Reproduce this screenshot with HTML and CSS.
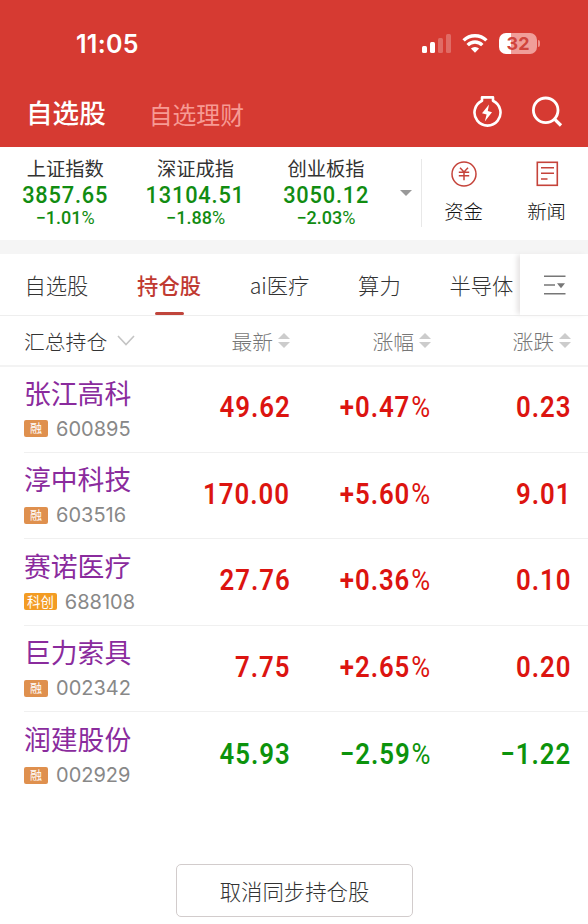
FILE: index.html
```html
<!DOCTYPE html>
<html lang="zh-CN">
<head>
    <meta charset="utf-8">
    <title>自选股</title>
    <link rel="stylesheet" href="styles.css">
</head>
<body>

<div id="container">
    <!-- Header box -->
    <header class="header-box">
        <div class="status-bar">
            <span class="time">11:05</span>
            <div class="status-icons">
                <svg class="signal" width="30" height="19" viewBox="0 0 30 19" fill="#fff">
                    <rect x="0" y="12" width="5" height="7" rx="1.5"/>
                    <rect x="8" y="8" width="5" height="11" rx="1.5"/>
                    <rect x="16" y="4" width="5" height="15" rx="1.5" opacity=".25"/>
                    <rect x="24" y="0" width="5" height="19" rx="1.5" opacity=".25"/>
                </svg>
                <svg class="wifi" width="26" height="19" viewBox="0 0 26 19" fill="none" stroke="#fff" stroke-width="3.4">
                    <path d="M1.6 6.4a16.2 16.2 0 0 1 22.8 0"/>
                    <path d="M5.7 11.1a10.3 10.3 0 0 1 14.6 0"/>
                    <path d="M8.9 14.6a5.8 5.8 0 0 1 8.2 0L13 18.8z" fill="#fff" stroke="none"/>
                </svg>
                <div class="battery"><span>32</span></div>
            </div>
        </div>
        <div class="title-bar">
            <h1>自选股</h1>
            <span class="title-other">自选理财</span>
            <svg class="icon-bolt" width="32" height="34" viewBox="0 0 32 34" fill="none" stroke="#fff" stroke-width="2.6" stroke-linejoin="round">
                <path d="M11 5.8V2.4h11v3.4A13 13 0 1 1 11 5.8z"/>
                <path d="M18 9.5l-7 8.8 4.6 1.2-1.8 7 7.2-9.2-4.2-1.2z" fill="#fff" stroke="none"/>
            </svg>
            <svg class="icon-search" width="32" height="32" viewBox="0 0 32 32" fill="none" stroke="#fff" stroke-width="2.8">
                <circle cx="14.7" cy="14.3" r="12.3"/>
                <path d="M23.3 22.8l6.7 6.7" stroke-width="3.2"/>
            </svg>
        </div>
    </header>

    <!-- Market indexes -->
    <section class="index-box">
        <div class="index-item">
            <div class="index-name">上证指数</div>
            <div class="index-value">3857.65</div>
            <div class="index-rate">−1.01<i>%</i></div>
        </div>
        <div class="index-item">
            <div class="index-name">深证成指</div>
            <div class="index-value">13104.51</div>
            <div class="index-rate">−1.88<i>%</i></div>
        </div>
        <div class="index-item">
            <div class="index-name">创业板指</div>
            <div class="index-value">3050.12</div>
            <div class="index-rate">−2.03<i>%</i></div>
        </div>
        <div class="index-more"><i class="arrow-down"></i></div>
        <div class="link-item">
            <svg width="26" height="26" viewBox="0 0 26 26" fill="none" stroke="#c5433a" stroke-width="1.5">
                <circle cx="13" cy="13" r="12"/>
                <path d="M9 6.8l4 4.2 4-4.2M7.8 11.3h10.4M7.8 14.8h10.4M13 11v8.2"/>
            </svg>
            <span>资金</span>
        </div>
        <div class="link-item">
            <svg width="24" height="26" viewBox="0 0 24 26" fill="none" stroke="#c5433a" stroke-width="1.6">
                <rect x="2.3" y="1.3" width="20" height="23"/>
                <path d="M6 6.8h13M6 12.3h13M6 18h6.5"/>
            </svg>
            <span>新闻</span>
        </div>
    </section>

    <!-- Group tabs -->
    <nav class="tabs">
        <a>自选股</a>
        <a class="active">持仓股</a>
        <a>ai医疗</a>
        <a>算力</a>
        <a>半导体</a>
        <div class="tabs-menu">
            <svg width="22" height="20" viewBox="0 0 22 20" fill="none" stroke="#777" stroke-width="1.4">
                <path d="M0 1.2h21.5M0 10h11M0 18.8h21.5"/>
                <path d="M13 8.2h8l-4 5z" fill="#777" stroke="none"/>
            </svg>
        </div>
    </nav>

    <div class="row table-head">
        <div class="head-group">汇总持仓
            <svg width="18" height="11" viewBox="0 0 18 11" fill="none" stroke="#c4c4c4" stroke-width="1.6"><path d="M1 1l8 8.5L17 1"/></svg>
        </div>
        <div class="head-col">最新<i class="sort"></i></div>
        <div class="head-col">涨幅<i class="sort"></i></div>
        <div class="head-col">涨跌<i class="sort"></i></div>
    </div>

    <!-- Stocks -->
    <main class="stocks">
        <div class="row stock up">
            <div class="stock-info">
                <div class="stock-name">张江高科</div>
                <div class="stock-code"><b class="tag">融</b>600895</div>
            </div>
            <div class="num"><span>49.62</span></div>
            <div class="num"><span>+0.47<i>%</i></span></div>
            <div class="num"><span>0.23</span></div>
        </div>
        <div class="row stock up">
            <div class="stock-info">
                <div class="stock-name">淳中科技</div>
                <div class="stock-code"><b class="tag">融</b>603516</div>
            </div>
            <div class="num"><span>170.00</span></div>
            <div class="num"><span>+5.60<i>%</i></span></div>
            <div class="num"><span>9.01</span></div>
        </div>
        <div class="row stock up">
            <div class="stock-info">
                <div class="stock-name">赛诺医疗</div>
                <div class="stock-code"><b class="tag tag-star">科创</b>688108</div>
            </div>
            <div class="num"><span>27.76</span></div>
            <div class="num"><span>+0.36<i>%</i></span></div>
            <div class="num"><span>0.10</span></div>
        </div>
        <div class="row stock up">
            <div class="stock-info">
                <div class="stock-name">巨力索具</div>
                <div class="stock-code"><b class="tag">融</b>002342</div>
            </div>
            <div class="num"><span>7.75</span></div>
            <div class="num"><span>+2.65<i>%</i></span></div>
            <div class="num"><span>0.20</span></div>
        </div>
        <div class="row stock down">
            <div class="stock-info">
                <div class="stock-name">润建股份</div>
                <div class="stock-code"><b class="tag">融</b>002929</div>
            </div>
            <div class="num"><span>45.93</span></div>
            <div class="num"><span>−2.59<i>%</i></span></div>
            <div class="num"><span>−1.22</span></div>
        </div>
    </main>

    <button class="cancel-button">取消同步持仓股</button>
</div>

</body>
</html>
```
FILE: styles.css
```css
* {
    box-sizing: border-box;
}

body {
    margin: 0;
    background-color: #fff;
    font-family: "Noto Sans CJK SC", sans-serif;
    color: #333;
}

#container {
    width: 588px;
    height: 924px;
    overflow: hidden;
}

svg {
    display: block;
    flex: none;
}

/* Header */
.header-box {
    height: 147px;
    background-color: #d63a32;
    color: #fff;
}

.status-bar {
    display: flex;
    align-items: center;
    justify-content: space-between;
    height: 87px;
    padding: 0 51px 0 76px;
}

.time {
    font: 600 25px/30px Inter, sans-serif;
    letter-spacing: 0.3px;
}

.status-icons {
    display: flex;
    align-items: center;
}

.wifi {
    margin: 0 11px 0 10px;
}

.battery {
    position: relative;
    width: 38px;
    height: 21px;
    border-radius: 7px;
    background: linear-gradient(90deg, #fff 12px, #f09e99 12px);
    text-align: center;
    font: 700 18px/21px Inter, sans-serif;
    color: #d0443d;
}

.battery::after {
    content: "";
    position: absolute;
    right: -3px;
    top: 7px;
    width: 2px;
    height: 7px;
    border-radius: 0 2px 2px 0;
    background-color: #ee918b;
}

.title-bar {
    display: flex;
    align-items: center;
    height: 50px;
    padding: 0 25px 0 26px;
}

.title-bar h1 {
    margin: 0;
    font-size: 26.6px;
    font-weight: 500;
    line-height: 40px;
}

.title-other {
    margin: 4px auto 0 43px;
    font-size: 23.8px;
    line-height: 36px;
    color: #f79a94;
}

.icon-bolt {
    margin-right: 28px;
}

/* Market indexes */
.index-box {
    display: flex;
    height: 107px;
    border-bottom: 14px solid #f5f5f5;
}

.index-item {
    width: 130.5px;
    padding-top: 8px;
    text-align: center;
    white-space: nowrap;
}

.index-name {
    font-size: 19.3px;
    line-height: 26px;
}

.index-value {
    font: 500 24.5px/28px Roboto, sans-serif;
    letter-spacing: 0.9px;
    transform: scaleX(0.89);
    color: #118c11;
}

.index-rate {
    font: 500 18px/18px Roboto, sans-serif;
    color: #118c11;
}

.index-rate i,
.num i {
    font-style: normal;
    font-weight: 400;
}

.index-more {
    display: flex;
    align-items: center;
    width: 30px;
    height: 68px;
    margin: 12px 0 0 1px;
    padding-left: 8px;
    border-right: 1px solid #e8e8e8;
}

.arrow-down {
    border: 6px solid transparent;
    border-top-color: #999;
    border-bottom: 0;
}

.link-item {
    display: flex;
    flex-direction: column;
    align-items: center;
    width: 83px;
    padding-top: 14px;
    font-size: 19.4px;
    font-weight: 300;
    line-height: 28px;
    color: #111;
}

.link-item span {
    margin-top: 10px;
}

/* Tabs */
.tabs {
    position: relative;
    display: flex;
    gap: 48.7px;
    height: 62px;
    padding-left: 24.5px;
    border-bottom: 1px solid #eee;
    font-size: 21.3px;
    font-weight: 300;
    line-height: 61px;
    white-space: nowrap;
    color: #333;
}

.tabs .active {
    position: relative;
    font-weight: 500;
    color: #c03a32;
}

.tabs .active::after {
    content: "";
    position: absolute;
    left: 50%;
    bottom: 0;
    width: 29px;
    height: 3px;
    margin-left: -14.5px;
    border-radius: 2px;
    background-color: #c0453c;
}

.tabs-menu {
    position: absolute;
    right: 0;
    top: 0;
    display: flex;
    align-items: center;
    width: 68px;
    height: 61px;
    padding-left: 24px;
    background-color: #fff;
    box-shadow: -4px 0 5px -1px #e6e4e4;
}

/* Table */
.row {
    display: grid;
    grid-template-columns: 1fr 126px 141px 140px;
    align-items: center;
    padding-right: 17px;
}

.table-head {
    height: 51px;
    padding-left: 24px;
    border-bottom: 2px solid #f3f3f3;
    font-size: 20.8px;
    font-weight: 300;
    color: #333;
}

.head-group {
    display: flex;
    align-items: center;
    gap: 10px;
}

.head-col {
    display: flex;
    align-items: center;
    justify-content: flex-end;
    color: #777;
}

.sort {
    width: 12px;
    margin-left: 5px;
}

.sort::before,
.sort::after {
    content: "";
    display: block;
    border: 6px solid transparent;
}

.sort::before {
    border-top: 0;
    border-bottom: 6px solid #ccc;
}

.sort::after {
    margin-top: 3px;
    border-bottom: 0;
    border-top: 6px solid #ccc;
}

.stocks {
    margin-top: -1px;
}

.stock {
    height: 86.5px;
    margin-left: 24px;
    border-bottom: 1px solid #f0f0f0;
}

.stock:last-child {
    border-bottom: 0;
}

.stock-info {
    padding-top: 2px;
    white-space: nowrap;
}

.stock-name {
    font-size: 26.8px;
    line-height: 38px;
    color: #8a2b9d;
}

.stock-code {
    display: flex;
    align-items: center;
    font: 20px/34px Inter, sans-serif;
    color: #888;
}

.tag {
    height: 17px;
    margin-right: 8px;
    padding: 0 6px;
    border-radius: 2px;
    background-color: #df904e;
    font: 12px/16px "Noto Sans CJK SC", sans-serif;
    color: #fff;
}

.tag-star {
    padding: 0 3px;
    background-color: #f39c23;
    font-size: 13.4px;
}

.num {
    padding-bottom: 3px;
    text-align: right;
    font: 600 30px/36px Roboto, sans-serif;
    white-space: nowrap;
}

/* condensed figures */
.num span {
    display: inline-block;
    margin-right: -0.2px;
    letter-spacing: 1.1px;
    transform: scaleX(0.86);
    transform-origin: right;
}

.num i {
    padding-left: 1px;
}

.up .num {
    color: #dc1410;
}

.down .num {
    color: #0c930c;
}

.cancel-button {
    display: block;
    width: 237px;
    height: 53px;
    margin: 65.5px 0 0 176px;
    padding: 0;
    border: 1px solid #d2cccc;
    border-radius: 5px;
    background-color: #fff;
    font: 300 21.4px/49px "Noto Sans CJK SC", sans-serif;
    color: #333;
}
```
